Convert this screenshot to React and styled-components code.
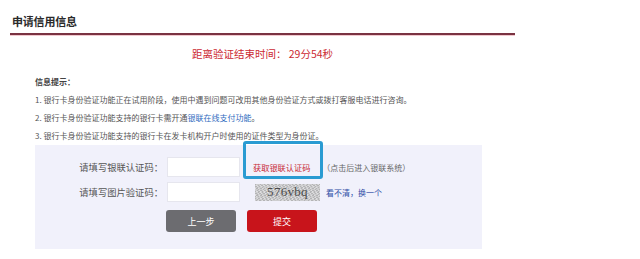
import React from "react";
import styled, { createGlobalStyle } from "styled-components";

const Global = createGlobalStyle`
  html, body { margin: 0; padding: 0; background: #fff; }
  body { font-family: "Noto Sans CJK SC", "Noto Sans", sans-serif; color: #555; }
`;

const Page = styled.div`
  width: 505px;
  padding: 14px 0 0 10px;
`;

const Header = styled.div`
  padding: 0 0 4px 2px;
  border-bottom: 2px solid #7a3342;
  box-shadow: 0 1px 0 #f2c9cf;
`;

const Title = styled.h1`
  margin: 0;
  font-size: 11px;
  line-height: 15px;
  font-weight: 700;
  color: #2a2a2a;
  letter-spacing: -0.2px;
`;

const Timer = styled.div`
  margin-top: 11px;
  text-align: center;
  font-size: 10.5px;
  line-height: 16px;
  color: #cc2a33;
`;

const Info = styled.div`
  margin: 11px 0 0 25px;
  font-size: 8px;
  line-height: 18px;
  color: #555;
`;

const InfoTitle = styled.div`
  font-weight: 700;
  color: #444;
`;

const Link = styled.span`
  color: #2f6cc0;
`;

const Panel = styled.div`
  margin: 0 0 0 25px;
  width: 447px;
  box-sizing: border-box;
  background: #f1f1fb;
  padding: 12px 0 17px 0;
  display: flex;
  flex-direction: column;
  gap: 5px;
`;

const Row = styled.div`
  display: flex;
  align-items: center;
  height: 20px;
`;

const Label = styled.div`
  width: 128px;
  text-align: right;
  font-size: 9.3px;
  color: #555;
  white-space: nowrap;
`;

const Input = styled.div`
  margin-left: 4px;
  width: 73px;
  height: 20px;
  background: #fff;
  box-sizing: border-box;
  border: 1px solid #e6e6ee;
`;

const GetCode = styled.span`
  position: relative;
  margin-left: 13px;
  font-size: 8.2px;
  color: #c82a36;
  white-space: nowrap;
  &::after {
    content: "";
    position: absolute;
    left: -10px;
    top: -20px;
    width: 74px;
    height: 32px;
    border: 3px solid #2a9bd2;
    border-radius: 3px;
  }
`;

const Hint = styled.span`
  margin-left: 12px;
  font-size: 8px;
  color: #666;
  white-space: nowrap;
`;

const Captcha = styled.div`
  margin-left: 15px;
  width: 65px;
  height: 17px;
  display: flex;
  align-items: center;
  justify-content: center;
  background:
    repeating-linear-gradient(60deg, rgba(255,255,255,0.35) 0 1px, transparent 1px 3px),
    repeating-linear-gradient(-30deg, rgba(90,90,90,0.22) 0 1px, transparent 1px 2px),
    #cdcdcf;
  font-family: "Liberation Serif", "DejaVu Serif", serif;
  font-size: 13px;
  letter-spacing: 0.3px;
  color: #4a4a4a;
  overflow: hidden;
`;

const Refresh = styled.span`
  margin-left: 6px;
  font-size: 8px;
  color: #2e4ea6;
  white-space: nowrap;
`;

const Buttons = styled.div`
  display: flex;
  gap: 11px;
  margin: 3px 0 0 131px;
`;

const Button = styled.div`
  width: 70px;
  height: 22px;
  border-radius: 3px;
  display: flex;
  align-items: center;
  justify-content: center;
  color: #fff;
  font-size: 9px;
  background: ${(p) => (p.$primary ? "#c8141b" : "#6c6c70")};
`;

export default function App() {
  return (
    <>
      <Global />
      <Page>
        <Header>
          <Title>申请信用信息</Title>
        </Header>
        <Timer>距离验证结束时间： 29分54秒</Timer>
        <Info>
          <InfoTitle>信息提示：</InfoTitle>
          <div>1. 银行卡身份验证功能正在试用阶段，使用中遇到问题可改用其他身份验证方式或拨打客服电话进行咨询。</div>
          <div>
            2. 银行卡身份验证功能支持的银行卡需开通<Link>银联在线支付功能</Link>。
          </div>
          <div>3. 银行卡身份验证功能支持的银行卡在发卡机构开户时使用的证件类型为身份证。</div>
        </Info>
        <Panel>
          <Row>
            <Label>请填写银联认证码：</Label>
            <Input />
            <GetCode>获取银联认证码</GetCode>
            <Hint>（点击后进入银联系统）</Hint>
          </Row>
          <Row>
            <Label>请填写图片验证码：</Label>
            <Input />
            <Captcha>576vbq</Captcha>
            <Refresh>看不清，换一个</Refresh>
          </Row>
          <Buttons>
            <Button>上一步</Button>
            <Button $primary>提交</Button>
          </Buttons>
        </Panel>
      </Page>
    </>
  );
}
